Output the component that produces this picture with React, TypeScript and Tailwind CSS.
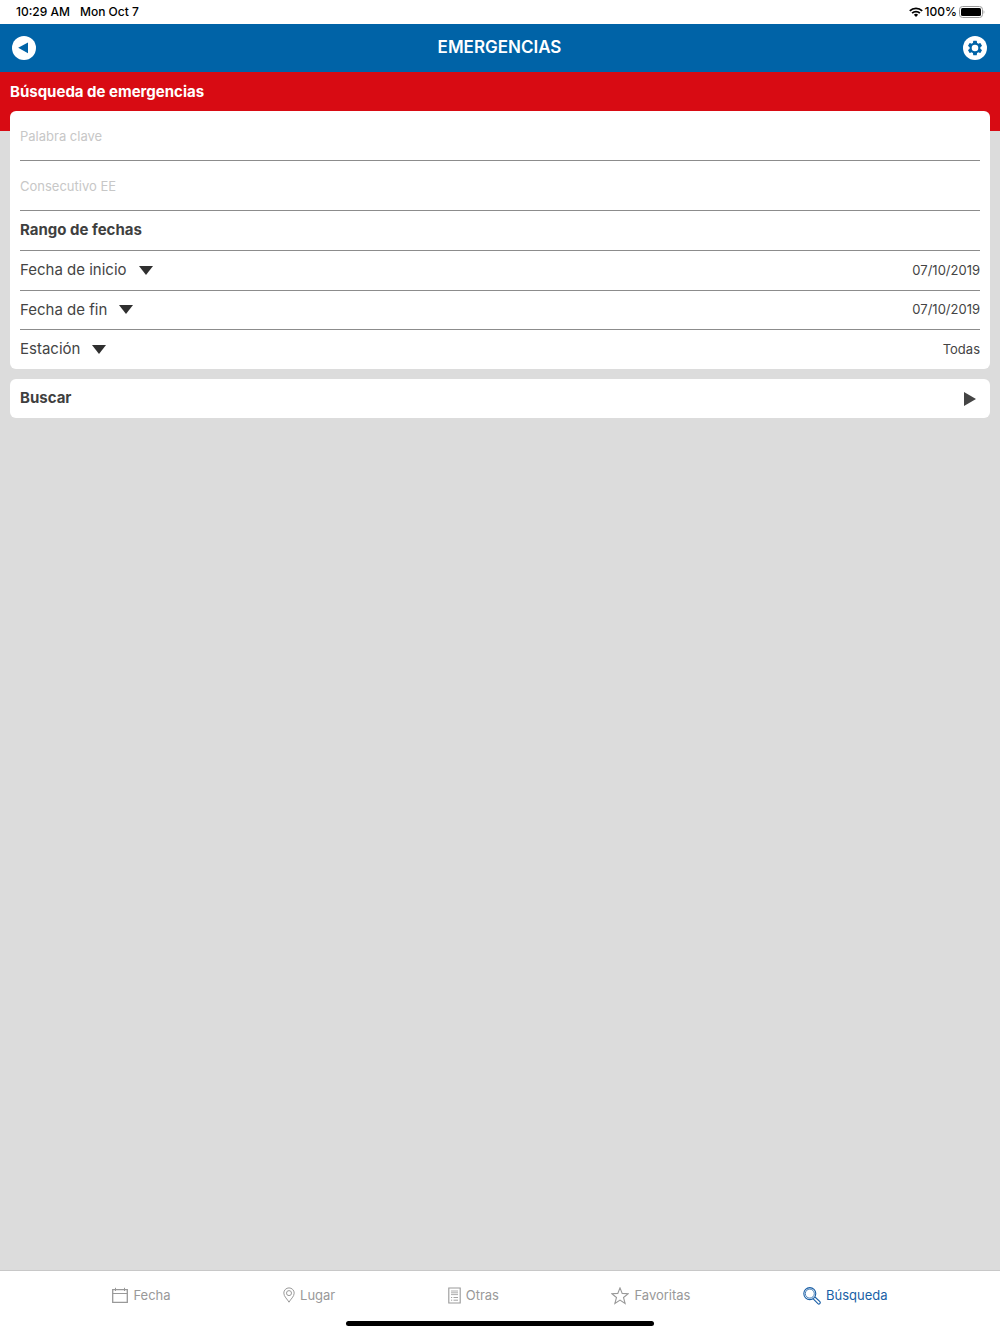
import { useState, type ReactNode } from "react";
import clsx from "clsx";

function WifiIcon() {
  return (
    <svg viewBox="0 0 14 10" className="h-[10px] w-[14px]" fill="none" stroke="currentColor" strokeWidth="1.8" aria-hidden="true">
      <path d="M0.8 3.9a8.8 8.8 0 0 1 12.4 0" />
      <path d="M3.1 6.2a5.5 5.5 0 0 1 7.8 0" />
      <path d="M7 9.9 4.9 7.8a3 3 0 0 1 4.2 0z" fill="currentColor" stroke="none" />
    </svg>
  );
}

function BatteryIcon() {
  return (
    <svg viewBox="0 0 26 12" className="h-3 w-[26px]" aria-hidden="true">
      <rect x="0.5" y="0.5" width="23" height="11" rx="3" fill="none" stroke="#9a9a9a" />
      <rect x="2" y="2" width="20" height="8" rx="1.5" fill="#000" />
      <path d="M24.6 4.2c1 .4 1 3.2 0 3.6z" fill="#9a9a9a" />
    </svg>
  );
}

function BackIcon() {
  return (
    <svg viewBox="0 0 24 24" className="size-6" aria-hidden="true">
      <circle cx="12" cy="12" r="12" fill="#fff" />
      <path d="M6.2 11.8 16 6.4v10.8z" fill="#0063a7" />
    </svg>
  );
}

function SettingsIcon() {
  return (
    <svg viewBox="0 0 24 24" className="size-6" aria-hidden="true">
      <circle cx="12" cy="12" r="12" fill="#fff" />
      <g transform="translate(3 3) scale(.75)">
        <path
          fill="#0063a7"
          fillRule="evenodd"
          d="M19.14 12.94c.04-.3.06-.61.06-.94s-.02-.64-.07-.94l2.03-1.58a.49.49 0 0 0 .12-.61l-1.92-3.32a.49.49 0 0 0-.59-.22l-2.39.96c-.5-.38-1.03-.7-1.62-.94l-.36-2.54A.48.48 0 0 0 13.92 2.4h-3.84a.48.48 0 0 0-.47.41l-.36 2.54c-.59.24-1.13.57-1.62.94l-2.39-.96a.48.48 0 0 0-.59.22L2.74 8.87a.48.48 0 0 0 .12.61l2.03 1.58c-.05.3-.09.63-.09.94s.02.64.07.94l-2.03 1.58a.49.49 0 0 0-.12.61l1.92 3.32c.12.22.37.29.59.22l2.39-.96c.5.38 1.03.7 1.62.94l.36 2.54c.05.24.24.41.48.41h3.84c.24 0 .44-.17.47-.41l.36-2.54c.59-.24 1.13-.56 1.62-.94l2.39.96c.22.08.47 0 .59-.22l1.92-3.32a.48.48 0 0 0-.12-.61zM12 16.4a4.4 4.4 0 1 1 0-8.8 4.4 4.4 0 0 1 0 8.8z"
        />
      </g>
    </svg>
  );
}

function Caret() {
  return (
    <svg viewBox="0 0 14 12" className="h-3 w-[14px]" fill="#2f2f2f" aria-hidden="true">
      <path d="M0 1h14l-7 9z" />
    </svg>
  );
}

function CalendarIcon() {
  return (
    <svg viewBox="0 0 16 18" className="h-[18px] w-4" fill="none" stroke="currentColor" aria-hidden="true">
      <path d="M.7 2.7h14.6v12.6H.7z" strokeWidth="1.3" />
      <path d="M.7 6.500h14.6M3.500.8v3.200M12.500.8v3.200" />
    </svg>
  );
}

function PinIcon() {
  return (
    <svg viewBox="0 0 12 18" className="h-[18px] w-3" fill="none" stroke="currentColor" aria-hidden="true">
      <path d="M6 15.200C4.600 12.400.8 9.600.8 6.100a5.200 5.200 0 0 1 10.400 0C11.200 9.600 7.400 12.400 6 15.200z" />
      <circle cx="6" cy="6.100" r="2.500" />
    </svg>
  );
}

function ListIcon() {
  return (
    <svg viewBox="0 0 13 18" className="h-[18px] w-[13px]" fill="none" stroke="currentColor" aria-hidden="true">
      <path d="M.8 1h11.400v15H.8z" strokeWidth="1.100" />
      <path d="M3 4h7M3 5.800h7M3 7.600h7" strokeWidth=".8" />
      <path d="M5.500 10.500H10M5.500 13.200H10M3 10.500h1.200M3 13.200h1.200" strokeWidth=".9" />
    </svg>
  );
}

function StarIcon() {
  return (
    <svg viewBox="0 0 18 18" className="size-[18px]" fill="none" stroke="currentColor" strokeWidth="1.1" aria-hidden="true">
      <path d="m9 .9 2.200 5.500 6 .3-4.700 3.800 1.600 5.900L9 13.100l-5.100 3.300 1.600-5.900L.8 6.700l6-.3z" />
    </svg>
  );
}

function SearchIcon() {
  return (
    <svg viewBox="0 0 18 18" className="size-[18px]" fill="none" stroke="currentColor" strokeWidth="1.1" aria-hidden="true">
      <circle cx="6.800" cy="6.600" r="6" />
      <circle cx="6.800" cy="6.600" r="4.500" strokeWidth=".8" />
      <path d="m10.200 11.800 4.700 4.900c1.300 1.100 3.100-.7 2-2L12 10" />
    </svg>
  );
}

const tabs: { id: string; label: string; icon: ReactNode }[] = [
  { id: "fecha", label: "Fecha", icon: <CalendarIcon /> },
  { id: "lugar", label: "Lugar", icon: <PinIcon /> },
  { id: "otras", label: "Otras", icon: <ListIcon /> },
  { id: "favoritas", label: "Favoritas", icon: <StarIcon /> },
  { id: "busqueda", label: "Búsqueda", icon: <SearchIcon /> },
];

function DateRow({ label, value, className }: { label: string; value: string; className: string }) {
  return (
    <button
      type="button"
      aria-haspopup="dialog"
      className={clsx("flex w-full items-center justify-between border-b border-[#8c8c8c]", className)}
    >
      <span className="flex items-center gap-3 text-[15px]">
        {label}
        <Caret />
      </span>
      <span className="text-[13px]">{value}</span>
    </button>
  );
}

export default function App() {
  const [tab, setTab] = useState("busqueda");

  return (
    <div className="flex min-h-screen flex-col bg-[#dcdcdc] font-['Inter','Liberation_Sans',sans-serif] text-[#444]">
      <div className="flex h-6 items-center justify-between bg-white pr-[15px] pl-4 text-xs font-medium text-black">
        <div className="flex gap-[10px]">
          <span>10:29 AM</span>
          <span>Mon Oct 7</span>
        </div>
        <div className="flex items-center gap-[2px]">
          <WifiIcon />
          <span>100%</span>
          <BatteryIcon />
        </div>
      </div>

      <header className="flex h-12 items-center justify-between bg-[#0063a7] pr-[13px] pl-3 text-white">
        <button type="button" aria-label="Volver">
          <BackIcon />
        </button>
        <h1 className="text-[17px] font-semibold">EMERGENCIAS</h1>
        <button type="button" aria-label="Ajustes">
          <SettingsIcon />
        </button>
      </header>

      <div className="h-[59px] bg-[#d80b13] px-[10px] pt-2">
        <h2 className="text-[15px] leading-6 font-bold text-white">Búsqueda de emergencias</h2>
      </div>

      <main className="-mt-5 flex-1 px-[10px]">
        <form onSubmit={(e) => e.preventDefault()} className="flex flex-col gap-[10px]">
          <div className="rounded-md bg-white px-[10px]">
            <input
              type="text"
              aria-label="Palabra clave"
              placeholder="Palabra clave"
              className="block h-[50px] w-full border-b border-[#8c8c8c] text-[13px] outline-none placeholder:text-[#c7c7c7]"
            />
            <input
              type="text"
              aria-label="Consecutivo EE"
              placeholder="Consecutivo EE"
              className="block h-[50px] w-full border-b border-[#8c8c8c] text-[13px] outline-none placeholder:text-[#c7c7c7]"
            />
            <h3 className="flex h-10 items-center border-b border-[#8c8c8c] text-[15px] font-bold text-[#3f3f3f]">
              Rango de fechas
            </h3>
            <DateRow label="Fecha de inicio" value="07/10/2019" className="h-10" />
            <DateRow label="Fecha de fin" value="07/10/2019" className="h-[39px]" />
            <div className="flex h-[39px] items-center">
              <label htmlFor="estacion" className="flex items-center gap-3 text-[15px]">
                Estación
                <Caret />
              </label>
              <select
                id="estacion"
                className="flex-1 appearance-none bg-transparent text-[13px] outline-none [text-align-last:right]"
              >
                <option>Todas</option>
              </select>
            </div>
          </div>

          <button type="submit" className="flex h-[39px] items-center justify-between rounded-md bg-white pr-[14px] pl-[10px]">
            <span className="text-[15px] font-bold text-[#3f3f3f]">Buscar</span>
            <svg viewBox="0 0 12 14" className="h-[14px] w-3" fill="#444" aria-hidden="true">
              <path d="M0 0v14l12-7z" />
            </svg>
          </button>
        </form>
      </main>

      <footer className="flex flex-col items-center border-t border-[#c8c8c8] bg-white pb-2">
        <nav className="flex h-[50px] w-full items-center justify-evenly">
          {tabs.map((t) => (
            <button
              key={t.id}
              type="button"
              onClick={() => setTab(t.id)}
              aria-current={tab === t.id ? "page" : undefined}
              className={clsx(
                "flex items-center gap-[5px] text-[13px]",
                tab === t.id ? "text-[#1a5fa6]" : "text-[#999]",
              )}
            >
              {t.icon}
              {t.label}
            </button>
          ))}
        </nav>
        <div className="h-[5px] w-[308px] rounded-full bg-black" />
      </footer>
    </div>
  );
}
